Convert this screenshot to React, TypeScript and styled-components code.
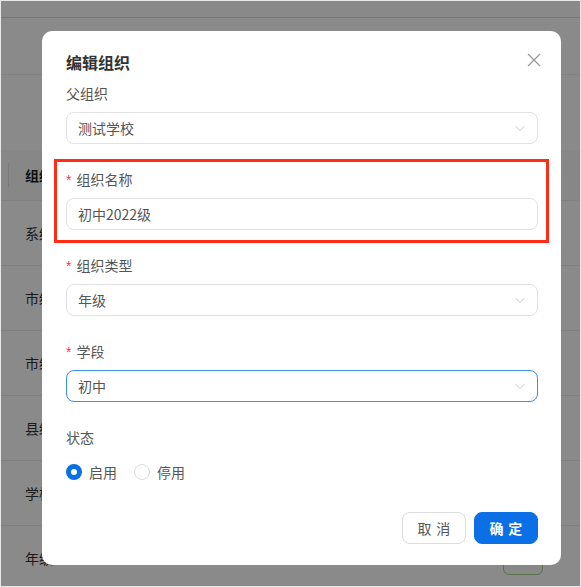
import React from "react";
import styled, { createGlobalStyle } from "styled-components";

const GlobalStyle = createGlobalStyle`
  html, body {
    margin: 0;
    padding: 0;
  }
  body {
    font-family: "Noto Sans CJK SC", "Noto Sans", sans-serif;
    color: #333;
  }
  * {
    box-sizing: border-box;
  }
`;

const rows = ["系统", "市级", "市级", "县级", "学校", "年级"];

const ChevronDown = () => (
  <svg width="12" height="12" viewBox="0 0 12 12" fill="none">
    <polyline points="1.5,4 6,8.5 10.5,4" stroke="#c9ccd1" strokeWidth="1" />
  </svg>
);

const CloseIcon = () => (
  <svg width="14" height="14" viewBox="0 0 14 14" fill="none">
    <path d="M1 1 L13 13 M13 1 L1 13" stroke="#9a9a9a" strokeWidth="1.3" />
  </svg>
);

export default function App() {
  return (
    <>
      <GlobalStyle />
      <Page>
        <TopBar />
        <Toolbar />
        <Table>
          <HeadRow>
            <ColDivider />
            <HeadCell>组织</HeadCell>
          </HeadRow>
          {rows.map((name, i) => (
            <Row key={i}>
              <Cell>{name}</Cell>
              <ActionBtn />
            </Row>
          ))}
        </Table>

        <Mask>
          <Modal>
            <CloseButton aria-label="close">
              <CloseIcon />
            </CloseButton>
            <Title>编辑组织</Title>

            <FormItem>
              <Label>父组织</Label>
              <Select>
                <span>测试学校</span>
                <ChevronDown />
              </Select>
            </FormItem>

            <FormItem highlighted>
              <Label required>组织名称</Label>
              <Input>初中2022级</Input>
            </FormItem>

            <FormItem>
              <Label required>组织类型</Label>
              <Select>
                <span>年级</span>
                <ChevronDown />
              </Select>
            </FormItem>

            <FormItem>
              <Label required>学段</Label>
              <Select focused>
                <span>初中</span>
                <ChevronDown />
              </Select>
            </FormItem>

            <FormItem>
              <Label>状态</Label>
              <RadioGroup>
                <RadioOption>
                  <RadioDot checked />
                  <span>启用</span>
                </RadioOption>
                <RadioOption>
                  <RadioDot />
                  <span>停用</span>
                </RadioOption>
              </RadioGroup>
            </FormItem>

            <Footer>
              <Button>取消</Button>
              <Button primary>确定</Button>
            </Footer>
          </Modal>
        </Mask>
      </Page>
    </>
  );
}

const Page = styled.div`
  position: relative;
  width: 581px;
  height: 587px;
  overflow: hidden;
  background: #fff;
  border: 1px solid #e8e8e8;
`;

const TopBar = styled.div`
  height: 17px;
  background: #fdfdfd;
  border-bottom: 1px solid #dcdcdc;
`;

const Toolbar = styled.div`
  height: 57px;
  border-bottom: 1px solid #f0f0f0;
`;

const Table = styled.div`
  padding-top: 75px;
`;

const HeadRow = styled.div`
  position: relative;
  display: flex;
  align-items: center;
  height: 51px;
  background: #fafafa;
  border-bottom: 1px solid #ececec;
  padding-left: 24px;
`;

const ColDivider = styled.span`
  position: absolute;
  left: 7px;
  top: 13px;
  width: 1px;
  height: 24px;
  background: #e4e4e4;
`;

const HeadCell = styled.span`
  font-size: 14px;
  font-weight: 700;
  color: #222;
`;

const Row = styled.div`
  display: flex;
  align-items: center;
  justify-content: space-between;
  height: 65px;
  padding: 0 37px 0 24px;
  border-bottom: 1px solid #ececec;
`;

const Cell = styled.span`
  font-size: 14px;
  color: #333;
`;

const ActionBtn = styled.span`
  width: 40px;
  height: 32px;
  margin-top: 2px;
  border: 1px solid #a8d790;
  border-radius: 6px;
  background: #fbfef9;
`;

const Mask = styled.div`
  position: absolute;
  inset: 0;
  background: rgba(0, 0, 0, 0.46);
  padding: 30px 0 0 41px;
`;

const Modal = styled.div`
  position: relative;
  width: 519px;
  height: 534px;
  background: #fff;
  border-radius: 10px;
  padding: 19px 23px 20px 24px;
`;

const CloseButton = styled.button`
  position: absolute;
  top: 21px;
  right: 19px;
  width: 16px;
  height: 16px;
  padding: 0;
  border: 0;
  background: none;
  display: flex;
  align-items: center;
  justify-content: center;
  cursor: pointer;
`;

const Title = styled.div`
  height: 24px;
  line-height: 24px;
  font-size: 16px;
  font-weight: 700;
  color: #333;
  margin-bottom: 8px;
`;

const FormItem = styled.div<{ highlighted?: boolean }>`
  position: relative;
  margin-bottom: 24px;
  ${(p) =>
    p.highlighted &&
    `
    &::after {
      content: "";
      position: absolute;
      top: -9px;
      left: -12px;
      right: -11px;
      bottom: -13px;
      border: 3px solid #ff2d16;
      pointer-events: none;
    }
  `}
`;

const Label = styled.div<{ required?: boolean }>`
  height: 22px;
  line-height: 22px;
  font-size: 14px;
  color: #555;
  margin-bottom: 8px;
  ${(p) =>
    p.required &&
    `
    &::before {
      content: "*";
      color: #f5365c;
      margin-right: 5px;
      font-family: "Liberation Sans", sans-serif;
    }
  `}
`;

const Field = styled.div<{ focused?: boolean }>`
  display: flex;
  align-items: center;
  justify-content: space-between;
  height: 32px;
  padding: 0 11px;
  border: 1px solid ${(p) => (p.focused ? "#3d8ef5" : "#e2e2e2")};
  border-radius: 8px;
  font-size: 14px;
  color: #555;
  background: #fff;
`;

const Select = styled(Field)``;

const Input = styled(Field)``;

const RadioGroup = styled.div`
  display: flex;
  align-items: center;
  height: 32px;
`;

const RadioOption = styled.label`
  display: inline-flex;
  align-items: center;
  gap: 7px;
  margin-right: 17px;
  font-size: 14px;
  color: #555;
`;

const RadioDot = styled.span<{ checked?: boolean }>`
  width: 16px;
  height: 16px;
  border-radius: 50%;
  background: #fff;
  border: ${(p) => (p.checked ? "5px solid #0b6fe6" : "1px solid #dadada")};
`;

const Footer = styled.div`
  display: flex;
  justify-content: flex-end;
  gap: 8px;
`;

const Button = styled.button<{ primary?: boolean }>`
  width: 64px;
  height: 32px;
  border-radius: 8px;
  font-family: inherit;
  font-size: 14px;
  letter-spacing: 0.34em;
  text-indent: 0.34em;
  cursor: pointer;
  border: 1px solid ${(p) => (p.primary ? "#0b6fe6" : "#dcdcdc")};
  background: ${(p) => (p.primary ? "#0b6fe6" : "#fff")};
  color: ${(p) => (p.primary ? "#fff" : "#555")};
  font-weight: ${(p) => (p.primary ? 700 : 400)};
`;
